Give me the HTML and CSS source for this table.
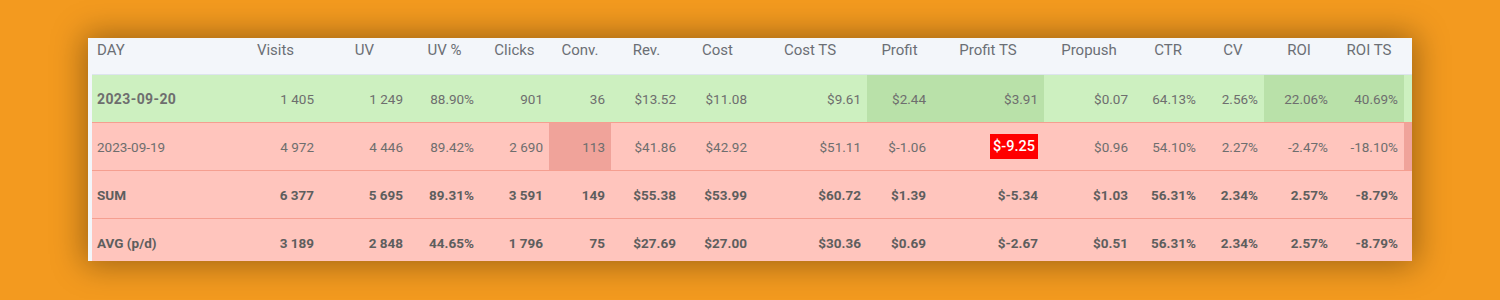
FILE: index.html
```html
<!DOCTYPE html>
<html>
<head>
<meta charset="utf-8">
<link rel="stylesheet" href="styles.css">
</head>
<body>
<div class="card">
<table class="stats">
<colgroup>
<col class="c-day"><col class="c-visits"><col class="c-uv"><col class="c-uvp"><col class="c-clicks"><col class="c-conv"><col class="c-rev"><col class="c-cost"><col class="c-costts"><col class="c-profit"><col class="c-profitts"><col class="c-propush"><col class="c-ctr"><col class="c-cv"><col class="c-roi"><col class="c-roits"><col class="c-extra">
</colgroup>
<thead>
<tr>
<th class="left">DAY</th><th>Visits</th><th>UV</th><th>UV %</th><th>Clicks</th><th>Conv.</th><th>Rev.</th><th>Cost</th><th>Cost TS</th><th>Profit</th><th>Profit TS</th><th>Propush</th><th>CTR</th><th>CV</th><th>ROI</th><th>ROI TS</th><th></th>
</tr>
</thead>
<tbody>
<tr class="good">
<td class="left strong">2023-09-20</td><td>1 405</td><td>1 249</td><td>88.90%</td><td>901</td><td>36</td><td>$13.52</td><td>$11.08</td><td>$9.61</td><td class="hi">$2.44</td><td class="hi">$3.91</td><td>$0.07</td><td>64.13%</td><td>2.56%</td><td class="hi">22.06%</td><td class="hi">40.69%</td><td></td>
</tr>
<tr class="bad">
<td class="left">2023-09-19</td><td>4 972</td><td>4 446</td><td>89.42%</td><td>2 690</td><td class="hi">113</td><td>$41.86</td><td>$42.92</td><td>$51.11</td><td>$-1.06</td><td><span class="alert">$-9.25</span></td><td>$0.96</td><td>54.10%</td><td>2.27%</td><td>-2.47%</td><td>-18.10%</td><td class="hi"></td>
</tr>
<tr class="bad total">
<td class="left">SUM</td><td>6 377</td><td>5 695</td><td>89.31%</td><td>3 591</td><td>149</td><td>$55.38</td><td>$53.99</td><td>$60.72</td><td>$1.39</td><td>$-5.34</td><td>$1.03</td><td>56.31%</td><td>2.34%</td><td>2.57%</td><td>-8.79%</td><td></td>
</tr>
<tr class="bad total">
<td class="left">AVG (p/d)</td><td>3 189</td><td>2 848</td><td>44.65%</td><td>1 796</td><td>75</td><td>$27.69</td><td>$27.00</td><td>$30.36</td><td>$0.69</td><td>$-2.67</td><td>$0.51</td><td>56.31%</td><td>2.34%</td><td>2.57%</td><td>-8.79%</td><td></td>
</tr>
</tbody>
</table>
</div>
</body>
</html>
```

FILE: styles.css
```css
html, body {
  margin: 0;
  padding: 0;
}
body {
  background: #f39a1f;
  padding: 38px 88px;
  font-family: Roboto, "Liberation Sans", sans-serif;
  color: #666;
}
.card {
  background: #f3f6fa;
  padding-left: 4px;
  height: 223px;
  overflow: hidden;
  box-shadow: 0 0 30px 4px rgba(0, 0, 0, 0.35);
}
.stats {
  width: 100%;
  table-layout: fixed;
  border-collapse: collapse;
  font-size: 13.5px;
}
.c-day { width: 139px; }
.c-visits { width: 89px; }
.c-uv { width: 89px; }
.c-uvp { width: 71px; }
.c-clicks { width: 69px; }
.c-conv { width: 62px; }
.c-rev { width: 71px; }
.c-cost { width: 71px; }
.c-costts { width: 114px; }
.c-profit { width: 65px; }
.c-profitts { width: 112px; }
.c-propush { width: 90px; }
.c-ctr { width: 68px; }
.c-cv { width: 62px; }
.c-roi { width: 70px; }
.c-roits { width: 70px; }
.c-extra { width: 8px; }

.stats th {
  font-weight: normal;
  font-size: 15px;
  color: #6b6f75;
  text-align: center;
  height: 33px;
  padding: 3px 0 0;
  vertical-align: top;
  line-height: 18px;
  border-bottom: 1px solid #dde4ee;
}
.stats th.left {
  text-align: left;
  padding-left: 5px;
}
.stats td {
  text-align: right;
  padding: 0 6px 0 0;
  height: 47px;
  white-space: nowrap;
  color: #6e6e6e;
}
.stats td.left {
  text-align: left;
  padding-left: 5px;
}
.stats td.strong {
  font-size: 14px;
  letter-spacing: 0.4px;
}
.good td {
  background: #cdf0c0;
}
.good td.hi {
  background: #b9e1a9;
}
.bad td {
  background: #ffc5bd;
  border-top: 1px solid #f59f90;
}
.bad td.hi {
  background: #f0a39a;
}
.strong,
.total td {
  font-weight: bold;
  color: #5e5e5e;
}
.alert {
  background: #ff0000;
  color: #fff;
  padding: 4px 3px;
  font-size: 14.5px;
  font-weight: 500;
}
```
